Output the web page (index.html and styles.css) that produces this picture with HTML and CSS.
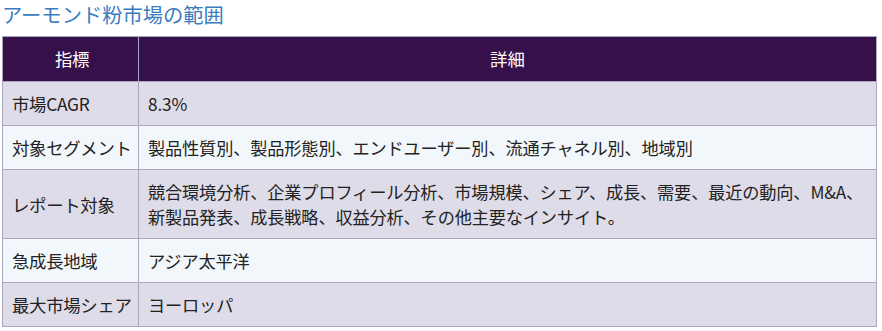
FILE: index.html
```html
<!DOCTYPE html>
<html lang="ja">
<head>
<meta charset="utf-8">
<link rel="stylesheet" href="styles.css">
</head>
<body>
<div class="page">
  <h2 class="title">アーモンド粉市場の範囲</h2>
  <table class="scope">
    <thead>
      <tr><th class="c1">指標</th><th>詳細</th></tr>
    </thead>
    <tbody>
      <tr class="odd"><td class="c1">市場CAGR</td><td class="c2">8.3%</td></tr>
      <tr class="even"><td class="c1">対象セグメント</td><td class="c2">製品性質別、製品形態別、エンドユーザー別、流通チャネル別、地域別</td></tr>
      <tr class="odd"><td class="c1">レポート対象</td><td class="c2">競合環境分析、企業プロフィール分析、市場規模、シェア、成長、需要、最近の動向、M&amp;A、新製品発表、成長戦略、収益分析、その他主要なインサイト。</td></tr>
      <tr class="even"><td class="c1">急成長地域</td><td class="c2">アジア太平洋</td></tr>
      <tr class="odd"><td class="c1">最大市場シェア</td><td class="c2">ヨーロッパ</td></tr>
    </tbody>
  </table>
</div>
</body>
</html>
```
FILE: styles.css
```css
html, body {
  margin: 0;
  padding: 0;
  background: #ffffff;
}
.page {
  padding: 0 5px 0 2px;
  font-family: "Noto Sans CJK JP", "Noto Sans", sans-serif;
}
.title {
  margin: 0 0 8px 0;
  font-size: 20.3px;
  font-weight: 400;
  line-height: 28px;
  color: #3b7cc0;
}
.scope {
  width: 100%;
  border-collapse: collapse;
  font-size: 17.4px;
  color: #222222;
}
.scope th, .scope td {
  border: 1px solid #aba6c0;
  padding: 9px 9px;
  line-height: 25px;
  text-align: left;
  vertical-align: middle;
}
.scope th {
  background: #36104a;
  color: #ffffff;
  font-weight: 400;
  text-align: center;
  padding: 9px 9px 10px;
}
.scope .c1 {
  width: 120px;
  white-space: nowrap;
  padding-right: 6px;
  letter-spacing: -0.3px;
}
.scope .c2 {
  font-size: 17.2px;
  letter-spacing: -0.15px;
  padding-right: 3px;
}
.scope tr.odd td {
  background: #dfdce9;
}
.scope tr.even td {
  background: #f2f7fb;
}
```
